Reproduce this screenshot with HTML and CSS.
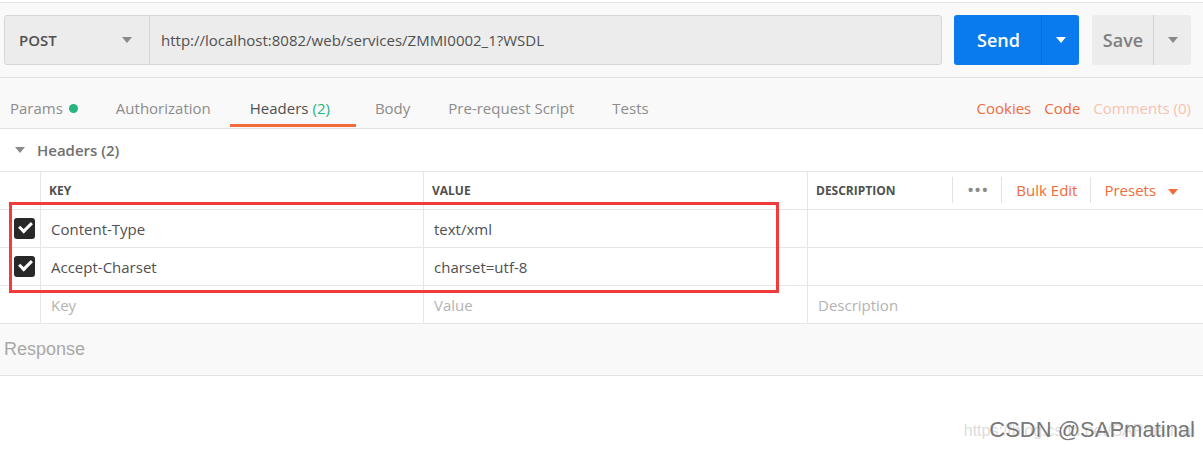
FILE: index.html
```html
<!DOCTYPE html>
<html lang="en">
<head>
  <meta charset="UTF-8" />
  <title>Postman - Headers</title>
  <link rel="stylesheet" href="styles.css">
</head>
<body>
  <!-- Request bar -->
  <div class="request-bar">
    <div class="url-group">
      <div class="method">
        <span>POST</span>
        <span class="caret caret-gray"></span>
      </div>
      <div class="url">http://localhost:8082/web/services/ZMMI0002_1?WSDL</div>
    </div>
    <div class="btn btn-send">
      <span class="btn-main">Send</span>
      <span class="btn-drop"><span class="caret caret-white"></span></span>
    </div>
    <div class="btn btn-save">
      <span class="btn-main">Save</span>
      <span class="btn-drop"><span class="caret caret-gray"></span></span>
    </div>
  </div>

  <!-- Tabs -->
  <div class="tabs">
    <div class="tab">Params <span class="dot"></span></div>
    <div class="tab">Authorization</div>
    <div class="tab active">Headers <span class="count">(2)</span></div>
    <div class="tab">Body</div>
    <div class="tab">Pre-request Script</div>
    <div class="tab">Tests</div>
    <div class="tab-links">
      <span class="link">Cookies</span>
      <span class="link">Code</span>
      <span class="link link-faded">Comments (0)</span>
    </div>
  </div>

  <div class="section-title">
    <span class="caret caret-gray"></span>
    Headers (2)
  </div>

  <div class="table-wrap">
    <div class="kv-table">
      <div class="row head">
        <div class="cell"></div>
        <div class="cell">KEY</div>
        <div class="cell">VALUE</div>
        <div class="cell desc-head">
          <span>DESCRIPTION</span>
          <div class="head-actions">
            <span class="sep"></span>
            <span class="dots">&bull;&bull;&bull;</span>
            <span class="sep"></span>
            <span class="link">Bulk Edit</span>
            <span class="sep"></span>
            <span class="link presets">Presets <span class="caret caret-orange"></span></span>
          </div>
        </div>
      </div>
      <div class="row">
        <div class="cell check-cell"><span class="checkbox"></span></div>
        <div class="cell">Content-Type</div>
        <div class="cell">text/xml</div>
        <div class="cell"></div>
      </div>
      <div class="row">
        <div class="cell check-cell"><span class="checkbox"></span></div>
        <div class="cell">Accept-Charset</div>
        <div class="cell">charset=utf-8</div>
        <div class="cell"></div>
      </div>
      <div class="row placeholder">
        <div class="cell"></div>
        <div class="cell">Key</div>
        <div class="cell">Value</div>
        <div class="cell">Description</div>
      </div>
    </div>
    <!-- annotation box drawn over the two filled rows -->
    <div class="highlight"></div>
  </div>

  <div class="response">Response</div>

  <div class="watermark">
    <span class="wm-back">https://blog.csdn.net/SAPmatinal</span>
    <span class="wm-front">CSDN @SAPmatinal</span>
  </div>
</body>
</html>
```

FILE: styles.css
```css
body {
  margin: 0;
  font-family: 'Open Sans', 'Noto Sans', sans-serif;
  font-size: 15px;
  color: #505050;
  background: #fff;
  position: relative;
  height: 449px;
  overflow: hidden;
}

/* carets */
.caret {
  display: inline-block;
  width: 0;
  height: 0;
  border-left: 5px solid transparent;
  border-right: 5px solid transparent;
  border-top: 6px solid #808080;
}

.caret-gray { border-top-color: #8a8a8a; }
.caret-white { border-top-color: #fff; }
.caret-orange { border-top-color: #f26b3a; margin-left: 8px; vertical-align: middle; }

/* REQUEST BAR */
.request-bar {
  display: flex;
  align-items: stretch;
  margin-top: 2px;
  border-top: 1px solid #e6e6e6;
  border-bottom: 1px solid #e2e2e2;
  background: #f9f9f9;
  padding: 12px 0 12px 4px;
  height: 50px;
}

.url-group {
  display: flex;
  width: 938px;
  background: #ececec;
  border: 1px solid #d6d6d6;
  border-radius: 3px;
  box-sizing: border-box;
}

.method {
  width: 145px;
  box-sizing: border-box;
  border-right: 1px solid #d6d6d6;
  display: flex;
  align-items: center;
  justify-content: space-between;
  padding: 0 17px 0 14px;
  font-weight: 600;
  color: #505050;
}

.url {
  display: flex;
  align-items: center;
  padding-left: 11px;
  color: #505050;
}

.btn {
  display: flex;
  border-radius: 3px;
  font-size: 18px;
  font-weight: 600;
  overflow: hidden;
}

.btn-send {
  margin-left: 12px;
  width: 125px;
  background: #097bed;
  color: #fff;
}

.btn-save {
  margin-left: 13px;
  width: 99px;
  background: #ececec;
  color: #808080;
}

.btn-main {
  flex: 1;
  display: flex;
  align-items: center;
  justify-content: center;
}

.btn-send .btn-main { padding-left: 2px; }
.btn-save .btn-main { padding-left: 1px; }

.btn-drop {
  width: 37px;
  display: flex;
  align-items: center;
  justify-content: center;
}

.btn-send .btn-drop { border-left: 1px solid #0a6ccf; }
.btn-save .btn-drop { border-left: 1px solid #d4d4d4; }

/* TABS */
.tabs {
  display: flex;
  align-items: stretch;
  height: 50px;
  background: #f9f9f9;
  border-bottom: 1px solid #e2e2e2;
}

.tab {
  display: flex;
  align-items: center;
  padding: 14px 19px 0 19px;
  color: #8c8c8c;
  border-bottom: 3px solid transparent;
  margin-bottom: 1px;
  white-space: nowrap;
}

.tab:first-child { padding: 14px 19px 0 10px; }

.tab.active {
  color: #505050;
  border-bottom-color: #f26b3a;
  padding: 14px 26px 0 20px;
}

.count { color: #26b47f; margin-left: 4px; }

.dot {
  display: inline-block;
  width: 9px;
  height: 9px;
  border-radius: 50%;
  background: #26b47f;
  margin-left: 6px;
}

.tab-links {
  margin-left: auto;
  display: flex;
  align-items: center;
  gap: 13px;
  padding: 14px 12px 0 0;
  margin-bottom: 4px;
}

.link { color: #f26b3a; }
.link-faded { color: #f8c3ad; }

/* SECTION TITLE */
.section-title {
  height: 42px;
  display: flex;
  align-items: center;
  padding-left: 15px;
  font-weight: 600;
  color: #707070;
}

.section-title .caret { margin-right: 12px; }

/* TABLE */
.table-wrap { position: relative; }

.kv-table {
  border-top: 1px solid #e6e6e6;
}

.row {
  display: grid;
  grid-template-columns: 41px 383px 384px 1fr;
  height: 37px;
  border-bottom: 1px solid #e6e6e6;
}

.cell {
  display: flex;
  align-items: center;
  padding-left: 10px;
  border-right: 1px solid #e6e6e6;
  white-space: nowrap;
}

.cell:last-child { border-right: none; }

.head .cell {
  font-size: 12px;
  font-weight: 700;
  color: #505050;
  padding: 0 0 1px 8px;
}

.desc-head { justify-content: space-between; }

.head-actions {
  display: flex;
  align-items: center;
  height: 100%;
  font-size: 15px;
  font-weight: 400;
  padding-right: 25px;
}

.head-actions .link { padding: 0 13px 0 14px; }
.head-actions .presets { padding: 0 0 0 13px; }

.sep {
  width: 1px;
  height: 26px;
  background: #e2e2e2;
}

.dots {
  color: #8a8a8a;
  font-size: 19px;
  letter-spacing: 0;
  padding: 0 13px 0 14px;
}

.check-cell { padding-left: 14px; }

.checkbox {
  position: relative;
  width: 21px;
  height: 21px;
  border-radius: 3px;
  background: #282828;
}

.checkbox::after {
  content: "";
  position: absolute;
  left: 5px;
  top: 4px;
  width: 10px;
  height: 5px;
  border-left: 3px solid #fff;
  border-bottom: 3px solid #fff;
  transform: rotate(-45deg);
}

.placeholder .cell { color: #b3b3b3; }

.highlight {
  position: absolute;
  left: 9px;
  top: 31px;
  width: 764px;
  height: 85px;
  border: 3px solid #f23b3b;
}

/* RESPONSE */
.response {
  height: 51px;
  display: flex;
  align-items: center;
  padding-left: 4px;
  background: #f9f9f9;
  border-bottom: 1px solid #e2e2e2;
  font-family: 'Liberation Sans', Arial, sans-serif;
  font-size: 18px;
  color: #a8a8a8;
}

/* watermark */
.watermark {
  position: absolute;
  right: 8px;
  top: 417px;
  font-family: 'Liberation Sans', Arial, sans-serif;
}

.wm-back {
  position: absolute;
  right: 0;
  top: 5px;
  font-size: 16px;
  color: rgba(190, 190, 190, 0.55);
  white-space: nowrap;
}

.wm-front {
  position: relative;
  font-size: 22px;
  color: rgba(85, 85, 85, 0.8);
  white-space: nowrap;
}
```
